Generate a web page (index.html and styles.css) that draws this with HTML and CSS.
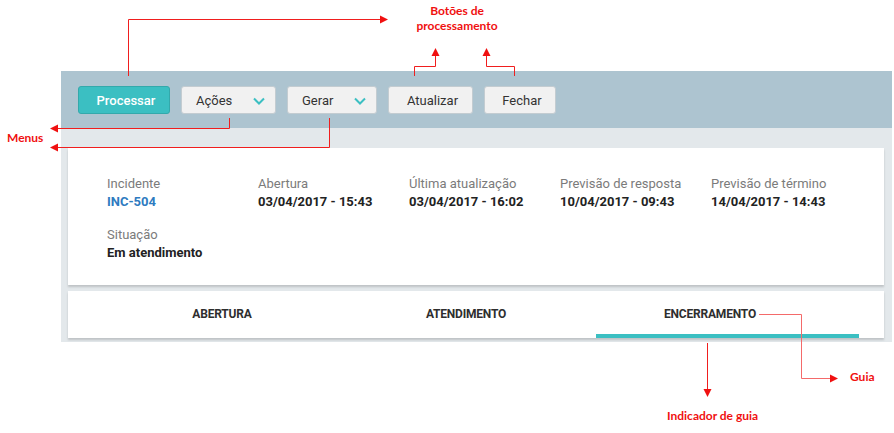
FILE: index.html
```html
<!DOCTYPE html>
<html lang="pt">
<head>
<meta charset="utf-8">
<title>Incidente INC-504</title>
<link rel="stylesheet" href="styles.css">
</head>
<body>
<div class="page">
  <div class="frame">
    <div class="toolbar">
      <button class="btn btn-primary btn-processar">Processar</button>
      <button class="btn btn-menu btn-acoes"><span>Ações</span>
        <svg class="chev" width="12" height="8" viewBox="0 0 12 8"><path d="M1 1.5 L6 6.5 L11 1.5" fill="none" stroke="#3bbfc2" stroke-width="2"/></svg>
      </button>
      <button class="btn btn-menu btn-gerar"><span>Gerar</span>
        <svg class="chev" width="12" height="8" viewBox="0 0 12 8"><path d="M1 1.5 L6 6.5 L11 1.5" fill="none" stroke="#3bbfc2" stroke-width="2"/></svg>
      </button>
      <button class="btn btn-atualizar">Atualizar</button>
      <button class="btn btn-fechar">Fechar</button>
    </div>
    <div class="content">
      <div class="card details">
        <div class="field"><div class="label">Incidente</div><div class="value link">INC-504</div></div>
        <div class="field"><div class="label">Abertura</div><div class="value">03/04/2017 - 15:43</div></div>
        <div class="field"><div class="label">Última atualização</div><div class="value">03/04/2017 - 16:02</div></div>
        <div class="field"><div class="label">Previsão de resposta</div><div class="value">10/04/2017 - 09:43</div></div>
        <div class="field"><div class="label">Previsão de término</div><div class="value">14/04/2017 - 14:43</div></div>
        <div class="field"><div class="label">Situação</div><div class="value">Em atendimento</div></div>
      </div>
      <div class="card tabs">
        <div class="tab">ABERTURA</div>
        <div class="tab">ATENDIMENTO</div>
        <div class="tab">ENCERRAMENTO</div>
        <div class="indicator"></div>
      </div>
    </div>
  </div>

  <svg class="notes" width="894" height="433" viewBox="0 0 894 433">
    <g fill="none" stroke="#f01e1e" stroke-width="1">
      <path d="M128.5 76 V19.5 H381"/>
      <path d="M414.5 76 V66.5 H435.5 V55"/>
      <path d="M514.5 76 V66.5 H486.5 V55"/>
      <path d="M229.5 118 V128.5 H58"/>
      <path d="M329.5 118 V147.5 H58"/>
      <path d="M759 314.5 H801.5 V378.5 H831" stroke="#f46a6a"/>
      <path d="M707.5 343 V389"/>
    </g>
    <g fill="#f01010">
      <polygon points="380,15.5 388,19.5 380,23.5"/>
      <polygon points="431.5,56 435.5,48 439.5,56"/>
      <polygon points="482.5,56 486.5,48 490.5,56"/>
      <polygon points="58,124.5 50,128.5 58,132.5"/>
      <polygon points="58,143.5 50,147.5 58,151.5"/>
      <polygon points="830,374.5 838,378.5 830,382.5"/>
      <polygon points="703.5,389 707.5,397 711.5,389"/>
    </g>
  </svg>
  <div class="note note-botoes">Botões de<br>processamento</div>
  <div class="note note-menus">Menus</div>
  <div class="note note-guia">Guia</div>
  <div class="note note-indicador">Indicador de guia</div>
</div>
</body>
</html>
```

FILE: styles.css
```css
* { box-sizing: border-box; }
html, body { margin: 0; padding: 0; background: #ffffff; }
body { font-family: Roboto, "Noto Sans", "Liberation Sans", sans-serif; }

.page {
  position: relative;
  width: 894px;
  height: 433px;
  padding: 71px 0 0 61px;
  overflow: hidden;
}

.frame {
  width: 831px;
  background: #e3e8eb;
}

.toolbar {
  height: 57px;
  background: #adc4d0;
  padding: 15px 17px 0;
  display: flex;
  gap: 11px;
  align-items: flex-start;
}

.btn {
  height: 28px;
  border: 1px solid #c3ccd1;
  border-radius: 3px;
  background: #f1f1f1;
  color: #333333;
  font-family: Roboto, "Noto Sans", sans-serif;
  font-size: 13px;
  padding: 0;
  display: flex;
  align-items: center;
  justify-content: center;
  cursor: pointer;
}

.btn-primary {
  background: #3bbfc2;
  border-color: #33a9ab;
  color: #ffffff;
  font-weight: 500;
}

.btn-processar { width: 92px; padding-left: 4px; }
.btn-acoes { width: 95px; }
.btn-gerar { width: 90px; }
.btn-atualizar { width: 85px; padding-left: 4px; }
.btn-fechar { width: 72px; padding-left: 4px; }

.btn-menu {
  justify-content: space-between;
  padding: 0 10px 0 14px;
}
.chev { display: block; margin-top: 1px; }

.content {
  padding: 20px 8px 4px 7px;
}

.card {
  background: #ffffff;
  box-shadow: 0 2px 2px rgba(0, 0, 0, 0.16);
}

.details {
  height: 137px;
  padding: 28px 39px 0;
  display: grid;
  grid-template-columns: repeat(5, 151px);
  row-gap: 17px;
  align-content: start;
}

.label {
  font-size: 13px;
  line-height: 16px;
  color: #7b7b7b;
}

.value {
  margin-top: 2px;
  font-size: 13px;
  line-height: 16px;
  font-weight: 700;
  color: #222222;
}

.value.link { color: #2e7bc0; }

.tabs {
  position: relative;
  margin-top: 6px;
  height: 47px;
  padding: 0 0 0 32px;
  display: grid;
  grid-template-columns: repeat(3, 244px);
  align-items: center;
}

.tab {
  text-align: center;
  font-size: 12px;
  font-weight: 700;
  color: #2e2e2e;
  letter-spacing: -0.2px;
  padding-bottom: 1px;
}

.indicator {
  position: absolute;
  left: 528px;
  bottom: 0;
  width: 263px;
  height: 4px;
  background: #3bbfc2;
}

.notes {
  position: absolute;
  left: 0;
  top: 0;
  pointer-events: none;
}

.note {
  position: absolute;
  font-family: Lato, "Liberation Sans", sans-serif;
  font-weight: 700;
  font-size: 12px;
  line-height: 15px;
  color: #f01010;
  white-space: nowrap;
}

.note-botoes { left: 407px; top: 3px; width: 100px; text-align: center; }
.note-menus { left: 7px; top: 130px; }
.note-guia { left: 850px; top: 369px; }
.note-indicador { left: 667px; top: 408px; }
```
